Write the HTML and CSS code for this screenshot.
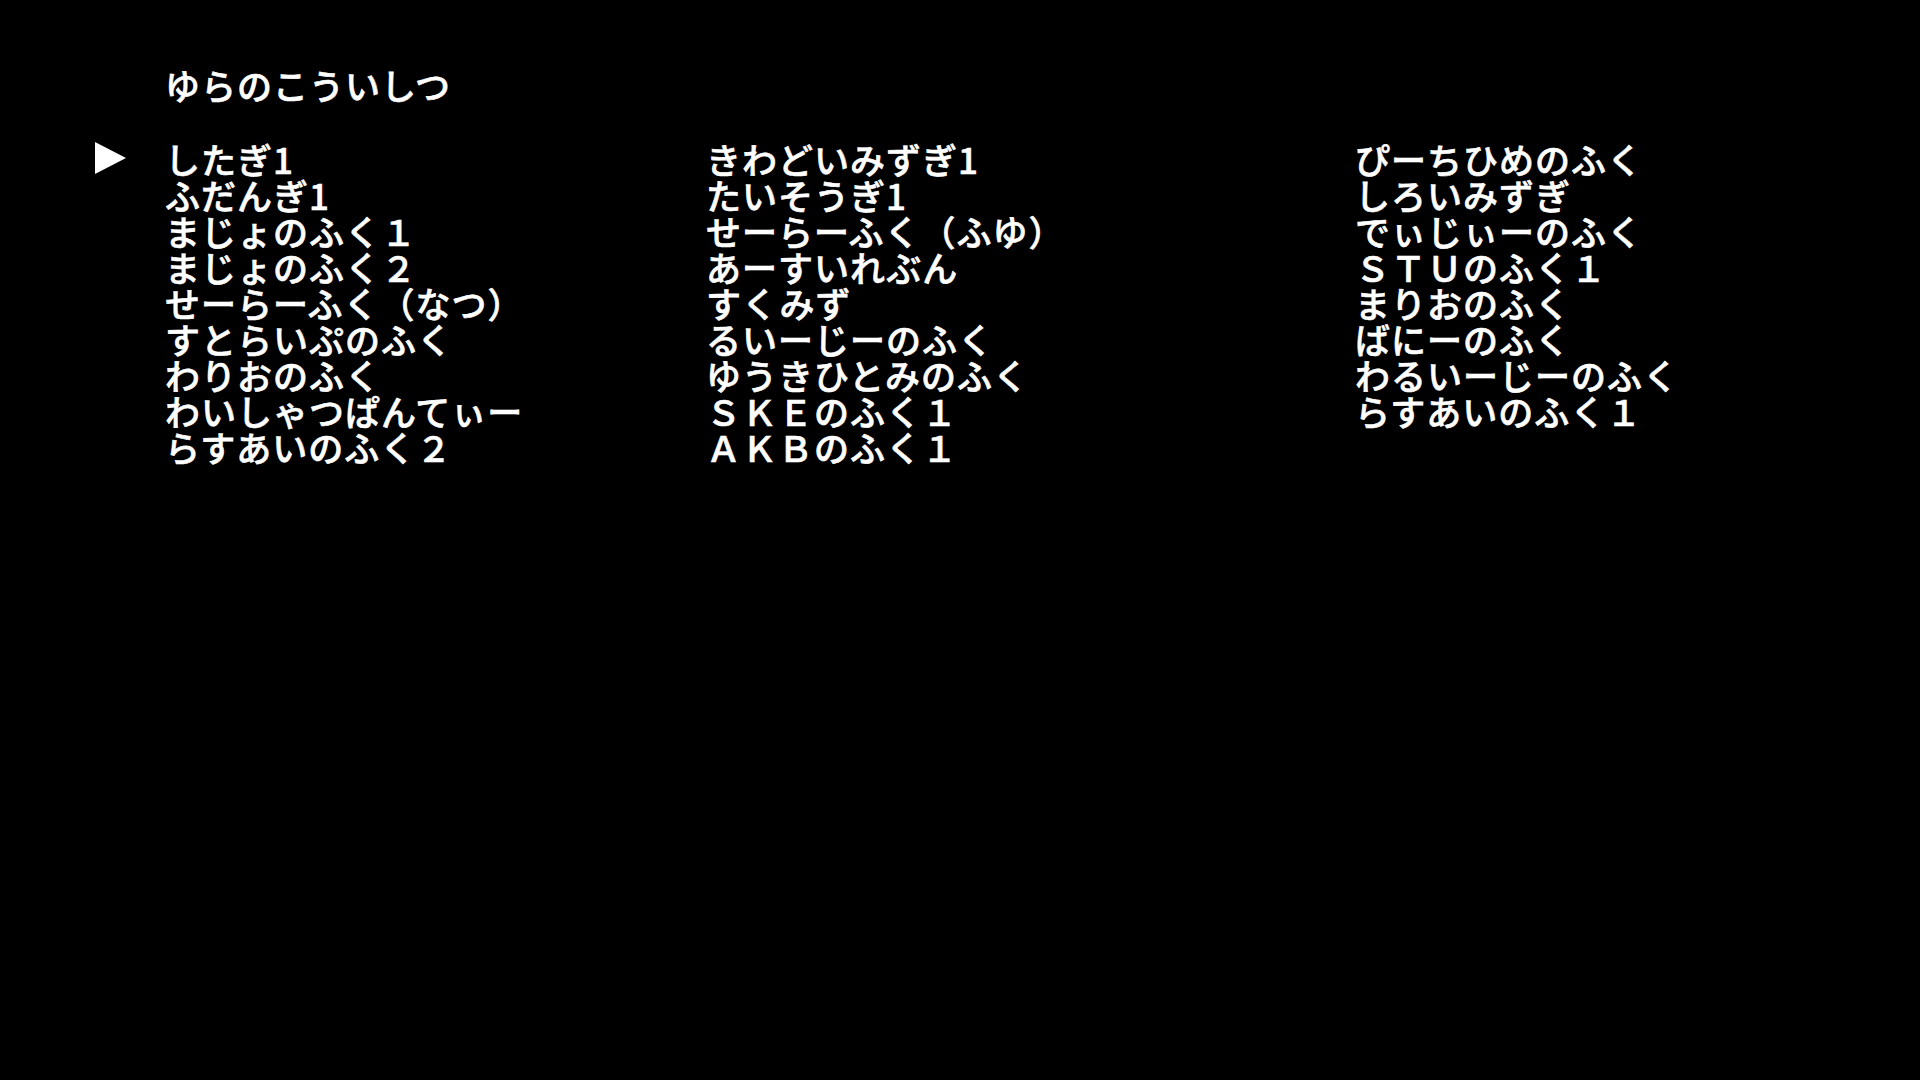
FILE: index.html
```html
<!DOCTYPE html>
<html lang="ja">
<head>
<meta charset="utf-8">
<title>ゆらのこういしつ</title>
<link rel="stylesheet" href="styles.css">
</head>
<body>
<main class="screen">
  <h1 class="title">ゆらのこういしつ</h1>
  <div class="menu">
    <div class="cursor-col">
      <svg class="cursor" viewBox="0 0 32 34" width="32" height="34" aria-hidden="true">
        <polygon points="1,1 32,17 1,33" fill="#fff"/>
      </svg>
    </div>
    <ul class="col col-a">
      <li>したぎ1</li>
      <li>ふだんぎ1</li>
      <li>まじょのふく１</li>
      <li>まじょのふく２</li>
      <li>せーらーふく（なつ）</li>
      <li>すとらいぷのふく</li>
      <li>わりおのふく</li>
      <li>わいしゃつぱんてぃー</li>
      <li>らすあいのふく２</li>
    </ul>
    <ul class="col col-b">
      <li>きわどいみずぎ1</li>
      <li>たいそうぎ1</li>
      <li>せーらーふく（ふゆ）</li>
      <li>あーすいれぶん</li>
      <li>すくみず</li>
      <li>るいーじーのふく</li>
      <li>ゆうきひとみのふく</li>
      <li>ＳＫＥのふく１</li>
      <li>ＡＫＢのふく１</li>
    </ul>
    <ul class="col col-c">
      <li>ぴーちひめのふく</li>
      <li>しろいみずぎ</li>
      <li>でぃじぃーのふく</li>
      <li>ＳＴＵのふく１</li>
      <li>まりおのふく</li>
      <li>ばにーのふく</li>
      <li>わるいーじーのふく</li>
      <li>らすあいのふく１</li>
    </ul>
  </div>
</main>
</body>
</html>
```

FILE: styles.css
```css
html, body {
  margin: 0;
  padding: 0;
  background: #000;
}

body {
  width: 1920px;
  height: 1080px;
  overflow: hidden;
  color: #fff;
  font-family: "Noto Sans CJK JP", "Noto Sans", sans-serif;
  font-size: 35px;
  font-weight: 500;
  letter-spacing: 1px;
  line-height: 36px;
  -webkit-text-stroke: 0.6px #fff;
}

.screen {
  padding-top: 67px;
}

.title {
  margin: 0 0 38px 0;
  padding-left: 165px;
  font-size: 35px;
  font-weight: 500;
  line-height: 36px;
}

.menu {
  display: grid;
  grid-template-columns: 165px 541px 649px 1fr;
  align-items: start;
}

.cursor-col {
  padding-left: 94px;
  padding-top: 0;
}

.cursor {
  display: block;
}

.col {
  list-style: none;
  margin: 0;
  padding: 0;
  display: flex;
  flex-direction: column;
}

.col li {
  white-space: nowrap;
  height: 36px;
}
```
